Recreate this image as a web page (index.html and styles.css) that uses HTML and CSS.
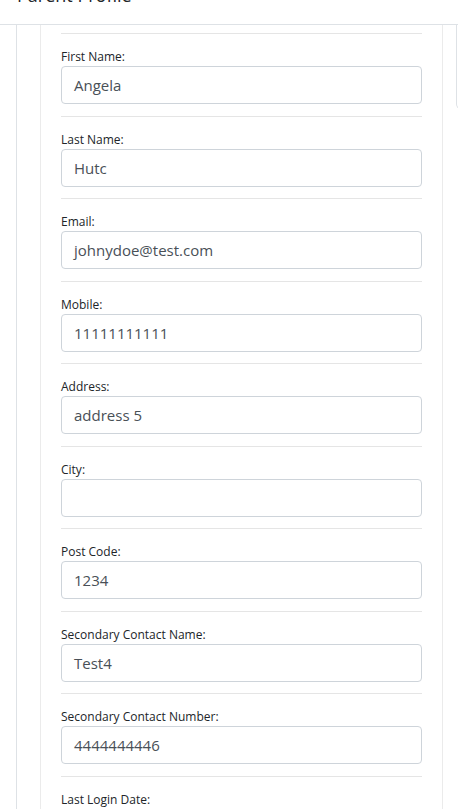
FILE: index.html
```html
<!DOCTYPE html>
<html lang="en">
<head>
<meta charset="utf-8">
<title>Parent Profile</title>
<link rel="stylesheet" href="styles.css">
</head>
<body>
<header class="page-header">
  <h1 class="page-title">Parent Profile</h1>
</header>
<main class="page-main">
  <section class="outer-panel">
    <div class="profile-card">
      <div class="field"><label class="field-label">First Name:</label><div class="field-input">Angela</div></div>
      <div class="field"><label class="field-label">Last Name:</label><div class="field-input">Hutc</div></div>
      <div class="field"><label class="field-label">Email:</label><div class="field-input">johnydoe@test.com</div></div>
      <div class="field"><label class="field-label">Mobile:</label><div class="field-input">11111111111</div></div>
      <div class="field"><label class="field-label">Address:</label><div class="field-input">address 5</div></div>
      <div class="field"><label class="field-label">City:</label><div class="field-input"></div></div>
      <div class="field"><label class="field-label">Post Code:</label><div class="field-input">1234</div></div>
      <div class="field"><label class="field-label">Secondary Contact Name:</label><div class="field-input">Test4</div></div>
      <div class="field"><label class="field-label">Secondary Contact Number:</label><div class="field-input">4444444446</div></div>
      <div class="field"><label class="field-label">Last Login Date:</label><div class="field-input"></div></div>
    </div>
  </section>
  <aside class="side-panel"></aside>
</main>
</body>
</html>
```

FILE: styles.css
```css
html, body {
  margin: 0;
  padding: 0;
  overflow: hidden;
  background: #fff;
  height: 100%;
}
body {
  font-family: "Open Sans", "Noto Sans", sans-serif;
  color: #212529;
}
.page-header {
  height: 24px;
  border-bottom: 1px solid #dee2e6;
  overflow: hidden;
  padding-left: 17px;
}
.page-title {
  margin: -17px 0 0 0;
  font-size: 18px;
  line-height: 24px;
  font-weight: 400;
  color: #212529;
}
.page-main {
  display: flex;
  align-items: flex-start;
  padding-left: 16px;
}
.outer-panel {
  flex-shrink: 0;
  border-left: 1px solid #dee2e6;
  padding-left: 23px;
  min-height: 900px;
}
.profile-card {
  width: 361px;
  padding: 8px 20px 0 20px;
  border-left: 1px solid #ebebeb;
  border-right: 1px solid #ebebeb;
  min-height: 900px;
}
.field {
  border-top: 1px solid #e5e5e5;
  padding: 14px 0 11.5px 0;
}
.field-label {
  display: block;
  font-size: 12px;
  line-height: 18px;
  color: #212529;
}
.field-input {
  box-sizing: border-box;
  height: 38px;
  border: 1px solid #ced4da;
  border-radius: 4px;
  padding: 0 12px;
  font-size: 15px;
  line-height: 36px;
  color: #495057;
}
.side-panel {
  flex-shrink: 0;
  margin-left: 13px;
  width: 40px;
  height: 83px;
  border-left: 1px solid #dee2e6;
  border-bottom: 1px solid #dee2e6;
  border-bottom-left-radius: 5px;
}
```
